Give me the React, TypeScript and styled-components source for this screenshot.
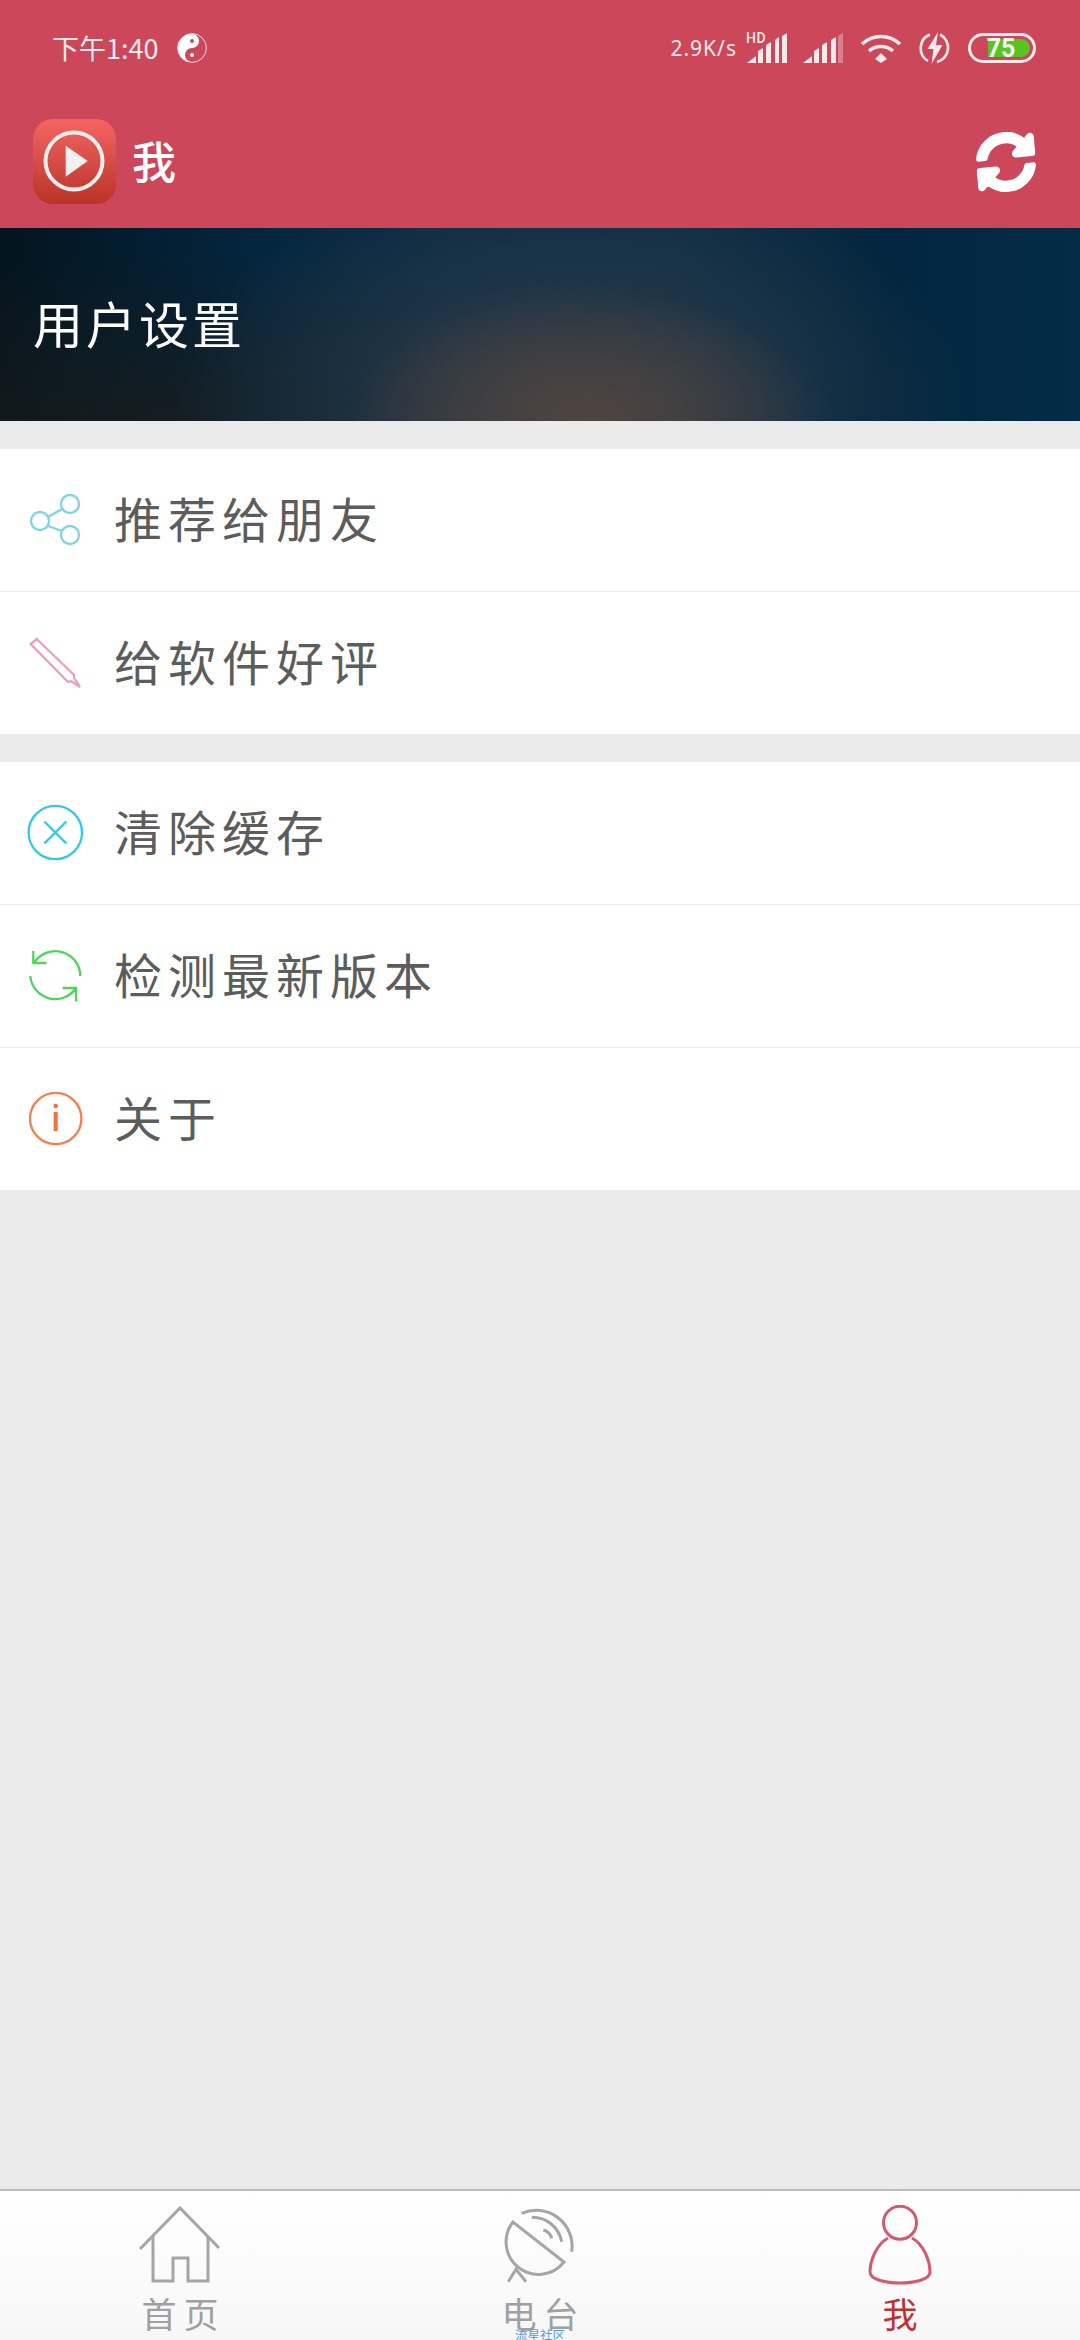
import React from "react";
import styled, { createGlobalStyle } from "styled-components";
import { FaSyncAlt } from "react-icons/fa";

const CJK = `"Noto Sans CJK SC", "Noto Sans", sans-serif`;

const GlobalStyle = createGlobalStyle`
  html, body {
    margin: 0;
    padding: 0;
    background: #eaeaea;
    font-family: ${CJK};
  }
`;

const Page = styled.div`
  width: 1080px;
  height: 2340px;
  display: flex;
  flex-direction: column;
  overflow: hidden;
  background: #eaeaea;
`;

const TopArea = styled.header`
  background: #cd475b;
  color: #fff;
`;

const StatusBar = styled.div`
  height: 95px;
  display: flex;
  align-items: center;
  justify-content: space-between;
  padding: 0 44px 0 52px;
`;

const StatusGroup = styled.div`
  display: flex;
  align-items: center;
`;

const Clock = styled.span`
  font-size: 27px;
  line-height: 30px;
  color: #f9e9eb;
  margin-right: 19px;
  white-space: nowrap;
`;

const Speed = styled.span`
  font-family: "Noto Sans", sans-serif;
  font-size: 21px;
  line-height: 30px;
  letter-spacing: 1px;
  color: #f9e9eb;
  margin-right: 6px;
`;

const Status = styled.svg<{ $gap?: number }>`
  display: block;
  flex: none;
  margin-left: ${(p) => p.$gap ?? 0}px;
`;

const SignalWrap = styled.div`
  position: relative;
  margin-left: 3px;
`;

const HdBadge = styled.span`
  position: absolute;
  left: 0;
  top: -2px;
  font-family: Roboto, sans-serif;
  font-size: 14px;
  font-weight: 500;
  letter-spacing: 0.6px;
  line-height: 14px;
  color: #f9e9eb;
`;

const AppBar = styled.div`
  height: 133px;
  display: flex;
  align-items: center;
  justify-content: space-between;
  padding: 0 44px 0 33px;
`;

const AppBarLeft = styled.div`
  display: flex;
  align-items: center;
  gap: 16px;
`;

const AppLogo = styled.div`
  width: 83px;
  height: 85px;
  border-radius: 20px;
  background: linear-gradient(180deg, #f4645f 0%, #d9504b 45%, #bb3226 100%);
`;

const AppTitle = styled.h1`
  margin: 0 0 3px;
  font-size: 44px;
  font-weight: 500;
  line-height: 60px;
`;

const SyncButton = styled.div`
  display: flex;
  font-size: 60px;
  color: #fff;
  transform: rotate(-5deg);

  & > svg {
    stroke-width: 18;
  }
`;

const Banner = styled.section`
  height: 193px;
  display: flex;
  align-items: center;
  padding: 0 0 5px 33px;
  box-sizing: border-box;
  background:
    radial-gradient(ellipse 240px 130px at 590px 193px, rgba(80, 68, 63, 0.95) 0%, rgba(70, 65, 64, 0.6) 55%, rgba(50, 58, 66, 0) 100%),
    radial-gradient(ellipse 400px 230px at 570px 170px, rgba(62, 64, 70, 0.95) 0%, rgba(38, 56, 72, 0.6) 55%, rgba(20, 50, 70, 0) 100%),
    radial-gradient(ellipse 480px 170px at 160px 193px, rgba(24, 28, 28, 0.8) 0%, rgba(24, 28, 28, 0) 100%),
    linear-gradient(90deg, #04141e 0%, #03263f 24%, #0c2c44 42%, #0e2e44 62%, #02263f 82%, #042c46 100%);
`;

const BannerTitle = styled.h2`
  margin: 0;
  font-size: 50px;
  font-weight: 400;
  letter-spacing: 3px;
  line-height: 60px;
  color: #fff;
`;

const MenuGroup = styled.ul`
  list-style: none;
  margin: 28px 0 0;
  padding: 0;
  background: #fff;
`;

const MenuRow = styled.li`
  height: 142px;
  display: flex;
  align-items: center;
  padding-left: 24px;
  background: #fff;

  & + & {
    border-top: 1px solid #ebebeb;
  }
`;

const MenuIcon = styled.svg`
  display: block;
  flex: none;
  width: 64px;
  height: 64px;
  fill: none;
  stroke-width: 2.3;
`;

const MenuLabel = styled.span`
  margin: 0 0 6px 26px;
  font-size: 48px;
  letter-spacing: 6px;
  line-height: 60px;
  color: #5c5c5c;
`;

const Spacer = styled.div`
  flex: 1;
`;

const TabBar = styled.nav`
  height: 151px;
  box-sizing: border-box;
  flex: none;
  display: grid;
  grid-template-columns: repeat(3, 1fr);
  border-top: 2px solid #bdbdbd;
  background: linear-gradient(180deg, #ffffff 0%, #f7f7f7 100%);
`;

const Tab = styled.div`
  position: relative;
  display: flex;
  flex-direction: column;
  align-items: center;
  padding-top: 14px;
`;

const TabIcon = styled.svg`
  display: block;
  width: 90px;
  height: 80px;
  fill: none;
  stroke-width: 3;
`;

const TabLabel = styled.span<{ $active?: boolean }>`
  margin-top: 3px;
  font-size: 35px;
  line-height: 50px;
  letter-spacing: ${(p) => (p.$active ? 0 : 7)}px;
  margin-right: ${(p) => (p.$active ? 0 : -7)}px;
  color: ${(p) => (p.$active ? "#c03030" : "#a0a0a0")};
`;

const Watermark = styled.span`
  position: absolute;
  left: 155px;
  top: 136px;
  font-size: 12.5px;
  line-height: 16px;
  color: #4aa0ea;
  white-space: nowrap;
`;

const YinYang = () => (
  <Status width="30" height="30" viewBox="0 0 30 30">
    <circle cx="15" cy="15" r="14.4" fill="none" stroke="#fff" strokeWidth="0.8" />
    <path d="M15 1A7 7 0 0 1 15 15 7 7 0 0 0 15 29 14 14 0 0 1 15 1Z" fill="#fff" />
    <circle cx="15" cy="8" r="2" fill="#cd475b" />
    <circle cx="15" cy="22" r="2" fill="#fff" />
  </Status>
);

const SignalHd = () => (
  <SignalWrap>
    <HdBadge>HD</HdBadge>
    <Status width="42" height="30" viewBox="0 0 42 30" fill="#f9e9eb">
      <path d="M1 30 10 23V30ZM12 30V18L17 15V30ZM20 30V12L25 9V30ZM29 30V7L33 4V30ZM36 30V3L41 0V30Z" />
    </Status>
  </SignalWrap>
);

const SignalPlain = () => (
  <Status $gap={15} width="41" height="30" viewBox="0 0 41 30" fill="#f9e9eb">
    <path d="M0 30 9 23V30ZM11 30V18L16 15V30ZM19 30V12L24 9V30ZM28 30V7L33 4V30Z" />
    <path d="M35 30V3L40 0V30Z" opacity="0.35" />
  </Status>
);

const Wifi = () => (
  <Status $gap={16} width="42" height="30" viewBox="0 0 42 30" fill="none" stroke="#f9e9eb" strokeWidth="3.6">
    <path d="M2 11C13 1 29 1 40 11" />
    <path d="M9 18C16 12 26 12 33 18" />
    <path d="M21 20 27 26 21 30 15 26Z" fill="#f9e9eb" stroke="none" />
  </Status>
);

const Charging = () => (
  <Status $gap={16} width="34" height="34" viewBox="0 0 34 34" fill="none" stroke="#f9e9eb" strokeWidth="2.6">
    <path d="M12 3.5A14.8 14.8 0 0 0 10 30" />
    <path d="M22 3.5A14.8 14.8 0 0 1 19 31" />
    <path d="M20 1 9.5 18H15.5L13.5 33 24.5 14H18Z" fill="#f9e9eb" stroke="none" />
  </Status>
);

const Battery = () => (
  <Status $gap={16} width="68" height="30" viewBox="0 0 68 30">
    <rect x="1.5" y="1.5" width="65" height="27" rx="13.5" fill="none" stroke="#f9e9eb" strokeWidth="3" />
    <path d="M20 6H53A9 9 0 0 1 53 24H20Z" fill="#58c322" />
    <text x="33" y="24" textAnchor="middle" fontFamily="Roboto, sans-serif" fontWeight="700" fontSize="25" fill="#f4f8ee">75</text>
  </Status>
);

const ShareIcon = () => (
  <MenuIcon viewBox="0 0 64 64" stroke="#7dd5e0">
    <circle cx="46" cy="16" r="9" />
    <circle cx="16" cy="33" r="9" />
    <circle cx="46" cy="47" r="9" />
    <path d="M24 29 38 21M24 38 38 43" />
  </MenuIcon>
);

const PenIcon = () => (
  <MenuIcon viewBox="0 0 64 64" stroke="#ee9fb9">
    <path d="M12.7 8 6.7 13 44 51 47 50 56 56 50 47 50 44Z" />
  </MenuIcon>
);

const ClearIcon = () => (
  <MenuIcon viewBox="0 0 64 64" stroke="#35c6ee">
    <circle cx="31.3" cy="31.5" r="26.7" />
    <path d="M20.3 20.5 42.3 42.5M42.3 20.5 20.3 42.5" />
  </MenuIcon>
);

const UpdateIcon = () => (
  <MenuIcon viewBox="0 0 64 64" stroke="#4fd65a">
    <path d="M10 19A25 25 0 0 1 56.3 32M9.3 7V19H22.6" />
    <path d="M6.3 32A25 25 0 0 0 52 44M38.6 44H52V57.6" />
  </MenuIcon>
);

const InfoIcon = () => (
  <MenuIcon viewBox="0 0 64 64" stroke="#f5804f">
    <circle cx="31.7" cy="31.5" r="25.7" />
    <circle cx="31.7" cy="19" r="2.3" fill="#f5703f" stroke="none" />
    <path d="M31.7 25V44" stroke="#f5703f" strokeWidth="4" />
  </MenuIcon>
);

const HomeIcon = () => (
  <TabIcon viewBox="0 0 90 80" stroke="#a5a5a5">
    <path d="M5 44 45 3 84 43" />
    <path d="M18 31V76H38V53H53V76H73V31" />
  </TabIcon>
);

const RadioIcon = () => (
  <TabIcon viewBox="0 0 90 80" stroke="#a5a5a5">
    <path d="M18 17A32 32 0 0 0 69 57Z" />
    <path d="M13.3 76.7 21 64.3 31 76.7" />
    <path d="M26.7 8.3A36 36 0 0 1 76.7 46.7" />
    <path d="M36.7 12.3A30 30 0 0 1 66.7 36.7" />
    <path d="M48.3 25A12 12 0 0 1 56.7 33.3" />
  </TabIcon>
);

const PersonIcon = () => (
  <TabIcon viewBox="0 0 90 80" stroke="#d4596f" strokeWidth="3.2">
    <circle cx="45" cy="17.7" r="16.5" />
    <path d="M33 33C22 39 15 55 15 67 15 75 32 78 45 78 58 78 75 75 75 67 75 55 68 39 57 33" />
  </TabIcon>
);

const firstGroup = [
  { label: "推荐给朋友", icon: <ShareIcon /> },
  { label: "给软件好评", icon: <PenIcon /> },
];

const secondGroup = [
  { label: "清除缓存", icon: <ClearIcon /> },
  { label: "检测最新版本", icon: <UpdateIcon /> },
  { label: "关于", icon: <InfoIcon /> },
];

const Menu: React.FC<{ items: { label: string; icon: React.ReactNode }[] }> = ({ items }) => (
  <MenuGroup>
    {items.map((item) => (
      <MenuRow key={item.label}>
        {item.icon}
        <MenuLabel>{item.label}</MenuLabel>
      </MenuRow>
    ))}
  </MenuGroup>
);

export default function App() {
  return (
    <Page>
      <GlobalStyle />
      <TopArea>
        <StatusBar>
          <StatusGroup>
            <Clock>下午1:40</Clock>
            <YinYang />
          </StatusGroup>
          <StatusGroup>
            <Speed>2.9K/s</Speed>
            <SignalHd />
            <SignalPlain />
            <Wifi />
            <Charging />
            <Battery />
          </StatusGroup>
        </StatusBar>
        <AppBar>
          <AppBarLeft>
            <AppLogo>
              <svg width="83" height="85" viewBox="0 0 83 85">
                <circle cx="41" cy="42" r="28.5" fill="none" stroke="#f4efee" strokeWidth="4" />
                <path d="M32.7 26.7 54.7 42 32.7 57.7Z" fill="#f2efee" />
              </svg>
            </AppLogo>
            <AppTitle>我</AppTitle>
          </AppBarLeft>
          <SyncButton>
            <FaSyncAlt />
          </SyncButton>
        </AppBar>
      </TopArea>
      <Banner>
        <BannerTitle>用户设置</BannerTitle>
      </Banner>
      <Menu items={firstGroup} />
      <Menu items={secondGroup} />
      <Spacer />
      <TabBar>
        <Tab>
          <HomeIcon />
          <TabLabel>首页</TabLabel>
        </Tab>
        <Tab>
          <RadioIcon />
          <TabLabel>电台</TabLabel>
          <Watermark>流星社区</Watermark>
        </Tab>
        <Tab>
          <PersonIcon />
          <TabLabel $active>我</TabLabel>
        </Tab>
      </TabBar>
    </Page>
  );
}
